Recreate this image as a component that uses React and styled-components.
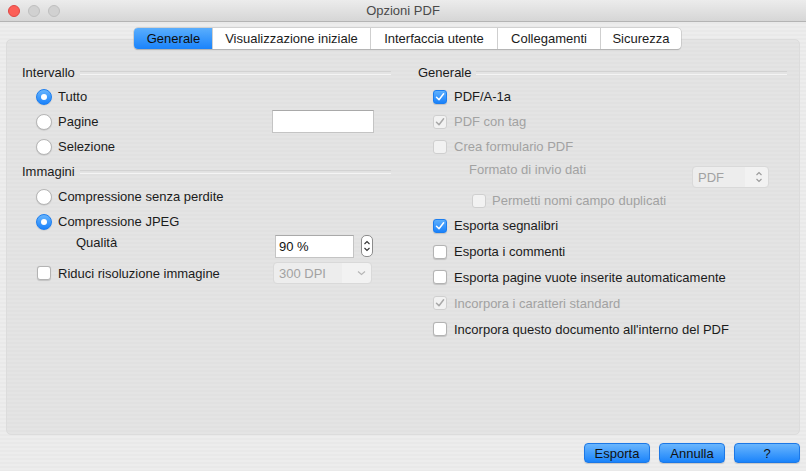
import React from "react";
import styled, { createGlobalStyle } from "styled-components";

const Global = createGlobalStyle`
  * { box-sizing: border-box; }
  html, body { margin: 0; padding: 0; }
  body {
    font-family: "Liberation Sans", Arial, sans-serif;
    font-size: 13px;
    color: #1b1b1b;
    background: #ececec;
  }
`;

const Window = styled.div`
  width: 806px;
  height: 471px;
  display: flex;
  flex-direction: column;
  background: repeating-linear-gradient(#ededed 0 2px, #e9e9e9 2px 4px);
  overflow: hidden;
`;

const TitleBar = styled.div`
  height: 22px;
  flex: none;
  position: relative;
  display: flex;
  align-items: center;
  justify-content: center;
  background: linear-gradient(#ececec, #d6d6d6);
  border-bottom: 1px solid #b4b4b4;
  color: #4a4a4a;
  font-size: 13px;
`;

const Lights = styled.div`
  position: absolute;
  left: 8px;
  top: 5px;
  display: flex;
  gap: 8px;
`;

const Light = styled.span`
  width: 12px;
  height: 12px;
  border-radius: 50%;
  background: ${(p) => (p.red ? "#fc5f57" : "#d1d1d1")};
  border: 1px solid ${(p) => (p.red ? "#df4744" : "#bfbfbf")};
`;

const Content = styled.div`
  flex: 1;
  display: flex;
  flex-direction: column;
  padding: 6px 6px 8px;
`;

const Tabs = styled.div`
  align-self: center;
  display: flex;
  height: 21px;
  margin-bottom: -10px;
  margin-left: 9px;
  position: relative;
  z-index: 1;
  background: #fff;
  border-radius: 4px;
  box-shadow: 0 0 0 0.5px #b9b9b9, 0 1px 1px rgba(0, 0, 0, 0.25);
`;

const Tab = styled.div`
  width: ${(p) => p.w}px;
  display: flex;
  align-items: center;
  justify-content: center;
  font-size: 13px;
  color: #1b1b1b;
  border-left: 1px solid ${(p) => (p.first ? "transparent" : "#cfcfcf")};
  ${(p) =>
    p.active &&
    `
    background: linear-gradient(#5aaefd, #1a83fb);
    border-radius: 4px 0 0 4px;
    color: #0d0d0d;
  `}
`;

const Panel = styled.div`
  flex: 1;
  display: grid;
  grid-template-columns: 369px 369px;
  column-gap: 27px;
  align-content: start;
  padding: 20px 12px 0 15px;
  border: 1px solid #dcdcdc;
  border-radius: 5px;
  background: repeating-linear-gradient(#e4e4e4 0 2px, #e1e1e1 2px 4px);
`;

const Column = styled.div`
  display: flex;
  flex-direction: column;
`;

const Row = styled.div`
  height: ${(p) => p.h || 25}px;
  display: flex;
  align-items: ${(p) => p.align || "center"};
  padding-left: ${(p) => p.indent || 0}px;
  color: ${(p) => (p.disabled ? "#a2a2a2" : "#1b1b1b")};
`;

const Heading = styled(Row)`
  gap: 5px;
  &::after {
    content: "";
    flex: 1;
    height: 2px;
    border-top: 1px solid #d2d2d2;
    border-bottom: 1px solid #f4f4f4;
    margin-top: 1px;
  }
`;

const Label = styled.span`
  margin-left: ${(p) => p.gap || 0}px;
  padding-top: ${(p) => p.top || 0}px;
`;

const Spacer = styled.div`
  flex: 1;
`;

const RadioDot = styled.span`
  width: 16px;
  height: 16px;
  flex: none;
  border-radius: 50%;
  margin-left: 14px;
  display: flex;
  align-items: center;
  justify-content: center;
  background: ${(p) => (p.on ? "linear-gradient(#68b5fd, #1a82fb)" : "#fff")};
  border: 1px solid ${(p) => (p.on ? "#1c7ef0" : "#b6b6b6")};
  box-shadow: 0 0.5px 1px rgba(0, 0, 0, 0.15);
  &::after {
    content: "";
    display: ${(p) => (p.on ? "block" : "none")};
    width: 6px;
    height: 6px;
    border-radius: 50%;
    background: #fff;
  }
`;

const Box = styled.span`
  width: 14px;
  height: 14px;
  flex: none;
  border-radius: 3px;
  margin-left: ${(p) => p.ml ?? 15}px;
  display: flex;
  align-items: center;
  justify-content: center;
  background: ${(p) =>
    p.on && !p.disabled ? "linear-gradient(#5eb0fd, #1a82fb)" : p.disabled ? "#f2f2f2" : "#fff"};
  border: 1px solid
    ${(p) => (p.on && !p.disabled ? "#1c7ef0" : p.disabled ? "#cfcfcf" : "#b3b3b3")};
  box-shadow: ${(p) => (p.disabled ? "none" : "0 0.5px 1px rgba(0,0,0,0.15)")};
`;

const TextField = styled.div`
  width: ${(p) => p.w}px;
  height: ${(p) => p.hgt || 23}px;
  margin-right: ${(p) => p.mr || 0}px;
  margin-top: ${(p) => p.mt || 0}px;
  background: #fff;
  border: 1px solid #c4c4c4;
  border-top-color: #a9a9a9;
  display: flex;
  align-items: center;
  padding-left: 3px;
  color: #111;
`;

const Stepper = styled.div`
  width: 12px;
  height: 22px;
  margin-left: 7px;
  margin-right: 18px;
  margin-top: 1px;
  border: 1px solid #8c8c8c;
  border-radius: 5px;
  background: #fff;
  display: flex;
  align-items: center;
  justify-content: center;
`;

const Select = styled.div`
  width: ${(p) => p.w}px;
  height: 22px;
  margin-right: ${(p) => p.mr || 0}px;
  margin-top: ${(p) => p.mt || 0}px;
  display: flex;
  align-items: center;
  justify-content: space-between;
  padding: 0 5px 0 5px;
  border: 1px solid #d9d9d9;
  border-radius: 4px;
  background: linear-gradient(90deg, #ededed 70%, #f2f2f2 70%);
  color: #a2a2a2;
`;

const Footer = styled.div`
  display: flex;
  justify-content: flex-end;
  gap: 9px;
  margin-top: 8px;
`;

const Button = styled.button`
  width: 66px;
  height: 20px;
  padding: 0;
  border: 1px solid #1c78e6;
  border-radius: 4px;
  background: linear-gradient(#6ab6fd, #1b84fb);
  font-family: "Liberation Sans", Arial, sans-serif;
  font-size: 13px;
  color: #111;
  box-shadow: 0 1px 1px rgba(0, 0, 0, 0.15);
`;

const Check = ({ color = "#fff" }) => (
  <svg width="10" height="10" viewBox="0 0 10 10">
    <polyline points="1.5,5.3 4,7.8 8.6,1.8" fill="none" stroke={color} strokeWidth="1.5" strokeLinecap="round" strokeLinejoin="round" />
  </svg>
);

const Radio = ({ on, children }) => (
  <Row>
    <RadioDot on={on} />
    <Label gap={6}>{children}</Label>
  </Row>
);

const CheckRow = ({ on, disabled, children, ml, gap = 7, indent, h }) => (
  <Row disabled={disabled} indent={indent} h={h}>
    <Box on={on} disabled={disabled} ml={ml}>
      {on && <Check color={disabled ? "#a8a8a8" : "#fff"} />}
    </Box>
    <Label gap={gap}>{children}</Label>
  </Row>
);

const UpDown = ({ color }) => (
  <svg width="8" height="14" viewBox="0 0 8 14">
    <polyline points="1.5,5 4,2.5 6.5,5" fill="none" stroke={color} strokeWidth="1.1" />
    <polyline points="1.5,9 4,11.5 6.5,9" fill="none" stroke={color} strokeWidth="1.1" />
  </svg>
);

const Chevron = () => (
  <svg width="9" height="6" viewBox="0 0 9 6">
    <polyline points="1,1.5 4.5,4.5 8,1.5" fill="none" stroke="#b5b5b5" strokeWidth="1.1" />
  </svg>
);

export default function App() {
  return (
    <>
      <Global />
      <Window>
        <TitleBar>
          <Lights>
            <Light red />
            <Light />
            <Light />
          </Lights>
          Opzioni PDF
        </TitleBar>
        <Content>
          <Tabs>
            <Tab first active w={78}>Generale</Tab>
            <Tab w={158}>Visualizzazione iniziale</Tab>
            <Tab w={127}>Interfaccia utente</Tab>
            <Tab w={103}>Collegamenti</Tab>
            <Tab w={81}>Sicurezza</Tab>
          </Tabs>
          <Panel>
            <Column>
              <Heading h={24}>Intervallo</Heading>
              <Radio on>Tutto</Radio>
              <Row>
                <RadioDot />
                <Label gap={6}>Pagine</Label>
                <Spacer />
                <TextField w={102} mr={17} />
              </Row>
              <Radio>Selezione</Radio>
              <Heading>Immagini</Heading>
              <Radio>Compressione senza perdite</Radio>
              <Radio on>Compressione JPEG</Radio>
              <Row h={24} indent={54} align="flex-start">
                <Label top={1}>Qualità</Label>
                <Spacer />
                <TextField w={79} hgt={23} mt={1}>90 %</TextField>
                <Stepper>
                  <UpDown color="#333" />
                </Stepper>
              </Row>
              <Row h={30}>
                <Box ml={15} />
                <Label gap={7}>Riduci risoluzione immagine</Label>
                <Spacer />
                <Select w={99} mr={19}>
                  300 DPI
                  <Chevron />
                </Select>
              </Row>
            </Column>
            <Column>
              <Heading h={24}>Generale</Heading>
              <CheckRow on>PDF/A-1a</CheckRow>
              <CheckRow on disabled>PDF con tag</CheckRow>
              <CheckRow disabled>Crea formulario PDF</CheckRow>
              <Row h={29} disabled indent={51} align="flex-start">
                <Label top={3}>Formato di invio dati</Label>
                <Spacer />
                <Select w={77} mr={18} mt={7}>
                  PDF
                  <UpDown color="#9a9a9a" />
                </Select>
              </Row>
              <CheckRow disabled ml={54} gap={6}>
                Permetti nomi campo duplicati
              </CheckRow>
              <CheckRow on h={25.8}>Esporta segnalibri</CheckRow>
              <CheckRow h={25.8}>Esporta i commenti</CheckRow>
              <CheckRow h={25.8}>Esporta pagine vuote inserite automaticamente</CheckRow>
              <CheckRow on disabled h={25.8}>Incorpora i caratteri standard</CheckRow>
              <CheckRow h={25.8}>Incorpora questo documento all'interno del PDF</CheckRow>
            </Column>
          </Panel>
          <Footer>
            <Button>Esporta</Button>
            <Button>Annulla</Button>
            <Button>?</Button>
          </Footer>
        </Content>
      </Window>
    </>
  );
}
